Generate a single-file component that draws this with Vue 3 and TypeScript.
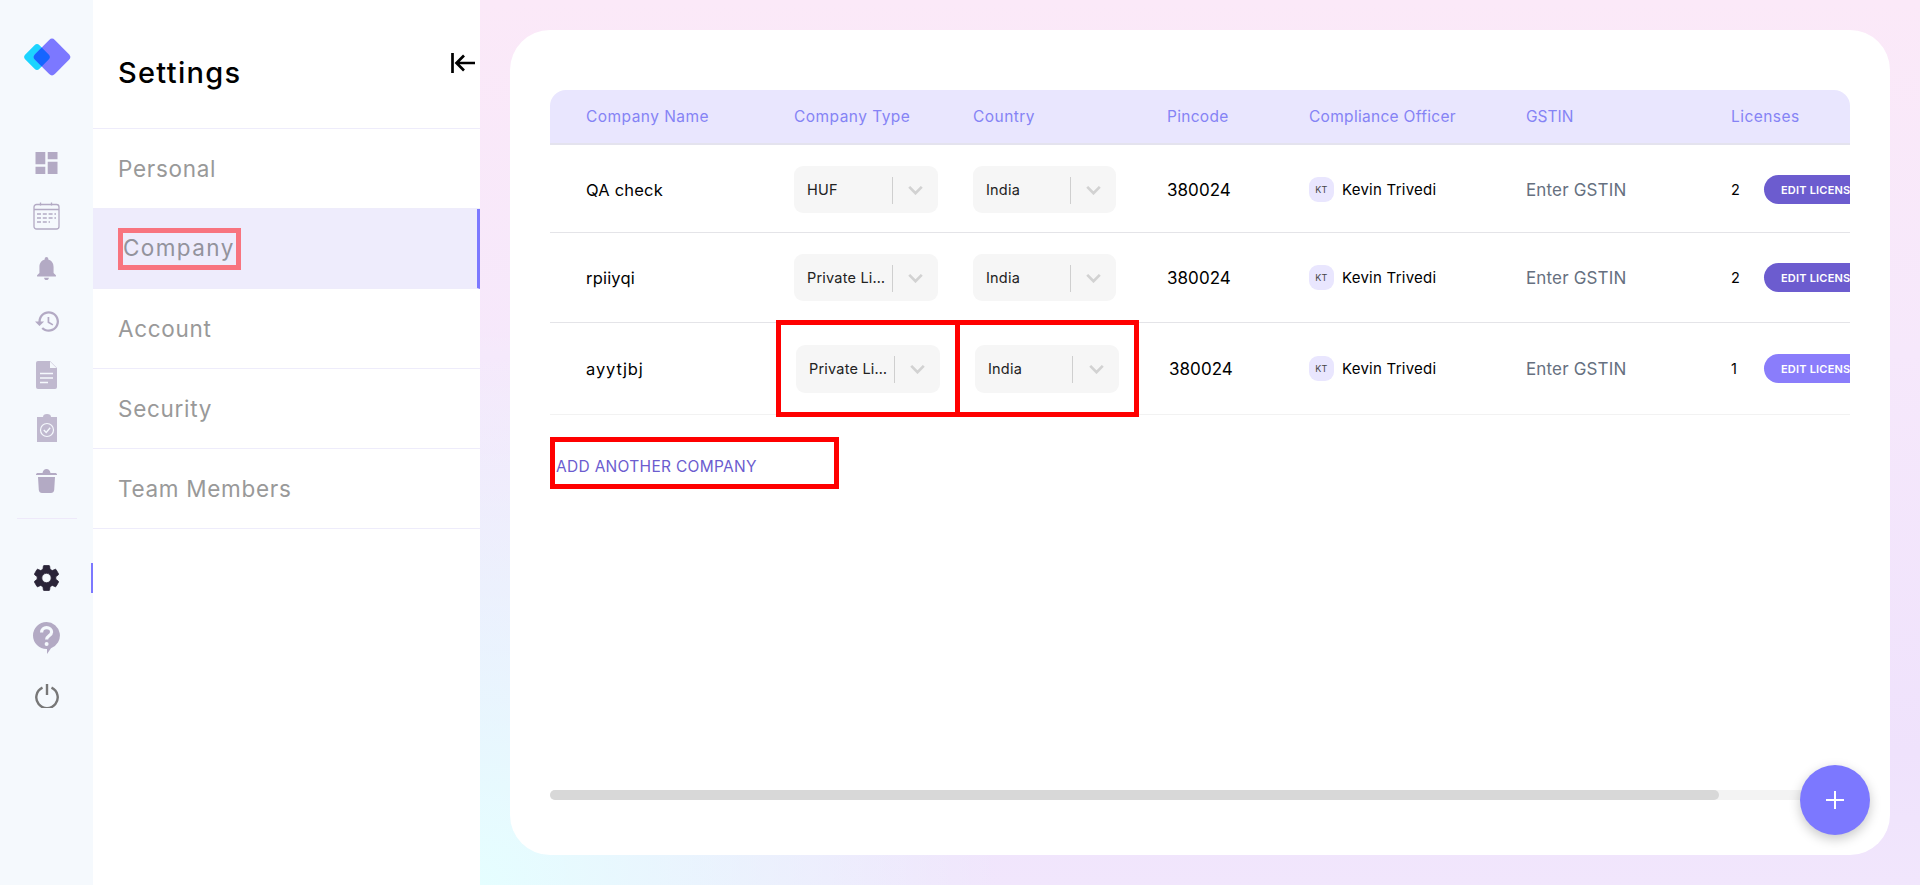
<template>
  <div class="page">
    <nav class="rail">
      <svg class="logo" viewBox="0 0 48 38" width="48" height="38">
        <defs>
          <clipPath id="logo-overlap">
            <rect x="15" y="5" width="28" height="28" rx="4" transform="rotate(45 29 19)" />
          </clipPath>
        </defs>
        <rect x="4" y="9" width="20" height="20" rx="3.5" transform="rotate(45 14 19)" fill="#1cd4ff" />
        <rect x="15" y="5" width="28" height="28" rx="4" transform="rotate(45 29 19)" fill="#7c78ff" />
        <g clip-path="url(#logo-overlap)">
          <rect x="4" y="9" width="20" height="20" rx="3.5" transform="rotate(45 14 19)" fill="#1565ff" />
        </g>
      </svg>

      <div class="rail-group">
        <a class="rail-item">
          <svg viewBox="3 3 18 18" width="23" height="22"><path fill="#b3aac4" d="M3 13h8V3H3v10zm0 8h8v-6H3v6zm10 0h8V11h-8v10zm0-18v6h8V3h-8z" /></svg>
        </a>
        <a class="rail-item">
          <svg viewBox="0 0 27 28" width="27" height="28" fill="none" stroke="#b3aac4">
            <rect x="1" y="2.5" width="25" height="24.5" rx="2.5" stroke-width="1.3" />
            <path d="M1 7.5h25M7.5 0.5v3M18.5 0.5v3" stroke-width="1.3" />
            <path d="M4 12h19M4 16h19M4 20h13" stroke-width="1.5" stroke-dasharray="4 1.8" />
          </svg>
        </a>
        <a class="rail-item">
          <svg viewBox="4 2.5 16 19.5" width="19" height="23"><path fill="#b3aac4" d="M12 22c1.1 0 2-.9 2-2h-4c0 1.1.89 2 2 2zm6-6v-5c0-3.07-1.64-5.64-4.5-6.32V4c0-.83-.67-1.5-1.5-1.5s-1.5.67-1.5 1.5v.68C7.63 5.36 6 7.92 6 11v5l-2 2v1h16v-1l-2-2z" /></svg>
        </a>
        <a class="rail-item">
          <svg viewBox="1 3 21 18" width="24" height="21"><path fill="#b3aac4" d="M13 3c-4.97 0-9 4.03-9 9H1l3.89 3.89.07.14L9 12H6c0-3.87 3.13-7 7-7s7 3.13 7 7-3.13 7-7 7c-1.93 0-3.68-.79-4.94-2.06l-1.42 1.42C8.27 19.99 10.51 21 13 21c4.97 0 9-4.03 9-9s-4.03-9-9-9zm-1 5v5l4.28 2.54.72-1.21-3.5-2.08V8H12z" /></svg>
        </a>
        <a class="rail-item">
          <svg viewBox="0 0 21 28" width="21" height="28">
            <path fill="#c0b9cf" d="M2 0h12l7 7v19a2 2 0 0 1-2 2H2a2 2 0 0 1-2-2V2a2 2 0 0 1 2-2z" />
            <path fill="#f5f9fd" d="M14 0.5V7h6.5z" />
            <path stroke="#f5f9fd" stroke-width="1.6" d="M4 12.5h13M4 17h13M4 21.5h8" />
          </svg>
        </a>
        <a class="rail-item">
          <svg viewBox="0 0 20 28" width="20" height="28">
            <path fill="#c0b9cf" d="M0 3h6a4 3 0 0 1 8 0h6v25H0z" />
            <circle cx="10" cy="16" r="6.5" fill="none" stroke="#f5f9fd" stroke-width="1.2" />
            <path d="M6.8 16l2.4 2.4 4-4.6" fill="none" stroke="#f5f9fd" stroke-width="1.4" />
          </svg>
        </a>
        <a class="rail-item">
          <svg viewBox="0 0 21 24" width="21" height="24">
            <path fill="#b3aac4" d="M0 5.5C0 4.500 1 4 2 4h4.500C7 1.500 8.500 0 10.500 0S14 1.500 14.500 4H19c1 0 2 .5 2 1.500V6H0zM2 8h17l-.8 13c-.2 2-1.500 3-3.200 3H6c-1.700 0-3-1-3.200-3z" />
          </svg>
        </a>
      </div>

      <div class="rail-divider"></div>

      <div class="rail-group">
        <a class="rail-item rail-item-tall active">
          <svg viewBox="2.5 2 19 20" width="25" height="26"><path fill="#2a2438" stroke="#2a2438" stroke-width="0.6" d="M19.14 12.94c.04-.3.06-.61.06-.94 0-.32-.02-.64-.07-.94l2.03-1.58c.18-.14.23-.41.12-.61l-1.92-3.32c-.12-.22-.37-.29-.59-.22l-2.39.96c-.5-.38-1.03-.7-1.62-.94l-.36-2.54c-.04-.24-.24-.41-.48-.41h-3.84c-.24 0-.43.17-.47.41l-.36 2.54c-.59.24-1.13.57-1.62.94l-2.39-.96c-.22-.08-.47 0-.59.22L2.74 8.87c-.12.21-.08.47.12.61l2.03 1.58c-.05.3-.09.63-.09.94s.02.64.07.94l-2.03 1.58c-.18.14-.23.41-.12.61l1.92 3.32c.12.22.37.29.59.22l2.39-.96c.5.38 1.03.7 1.62.94l.36 2.54c.05.24.24.41.48.41h3.84c.24 0 .44-.17.47-.41l.36-2.54c.59-.24 1.13-.56 1.62-.94l2.39.96c.22.08.47 0 .59-.22l1.92-3.32c.12-.22.07-.47-.12-.61l-2.01-1.58zM12 15.6c-1.98 0-3.6-1.62-3.6-3.6s1.62-3.6 3.6-3.6 3.6 1.62 3.6 3.6-1.62 3.6-3.6 3.6z" /></svg>
        </a>
        <a class="rail-item rail-item-tall">
          <svg viewBox="0 0 27 32" width="27" height="32">
            <path fill="#b3aac4" d="M13.5 0a13.5 13.5 0 0 1 4.5 26.2L14 32v-5H13.5a13.5 13.5 0 0 1 0-27z" />
            <path fill="none" stroke="#f5f9fd" stroke-width="3.2" d="M8.600 10.500c0-3 2.200-4.800 5-4.800s5 1.700 5 4.300c0 3.800-5 3.800-5 7.500" />
            <circle cx="13.6" cy="22" r="2" fill="#f5f9fd" />
          </svg>
        </a>
        <a class="rail-item rail-item-tall">
          <svg class="power" viewBox="0 0 24 24" width="24" height="24" fill="none" stroke="#777" stroke-width="2.4">
            <path d="M12 0v11" />
            <path d="M7.5 3.7A10.700 10.700 0 1 0 16.500 3.700" />
          </svg>
        </a>
      </div>
    </nav>

    <aside class="side">
      <header class="side-head">
        <h1>Settings</h1>
        <svg class="collapse" viewBox="0 0 24 20" width="24" height="20" fill="none" stroke="#000" stroke-width="2.7">
          <path d="M1.5 0v20M24 10H6M13 2.500L5.500 10l7.500 7.500" />
        </svg>
      </header>
      <a v-for="link in links" :key="link" class="side-link" :class="{ current: link === 'Company' }">
        <span>{{ link }}</span>
      </a>
    </aside>

    <main class="main">
      <section class="card">
        <div class="table-wrap">
          <div class="table">
            <div class="row head">
              <div v-for="col in columns" :key="col">{{ col }}</div>
            </div>
            <div v-for="(c, i) in companies" :key="c.name" class="row body" :class="'row-' + (i + 1)">
              <div class="name">{{ c.name }}</div>
              <div class="pick type">
                <span class="pick-text">{{ c.type }}</span>
                <svg viewBox="0 0 16 10" width="15" height="9" fill="none" stroke="#d2d2d2" stroke-width="3"><path d="M1 1l7 7 7-7" /></svg>
              </div>
              <div class="pick country">
                <span class="pick-text">{{ c.country }}</span>
                <svg viewBox="0 0 16 10" width="15" height="9" fill="none" stroke="#d2d2d2" stroke-width="3"><path d="M1 1l7 7 7-7" /></svg>
              </div>
              <div class="pin">{{ c.pincode }}</div>
              <div class="officer"><span class="avatar">KT</span>Kevin Trivedi</div>
              <div class="gstin">Enter GSTIN</div>
              <div class="lic">
                <span class="lic-count">{{ c.licenses }}</span>
                <button class="lic-btn">EDIT LICENSES</button>
              </div>
            </div>
          </div>
          <div class="add-row">
            <a class="add">ADD ANOTHER COMPANY</a>
          </div>
          <div class="mark mark-type"></div>
          <div class="mark mark-country"></div>
        </div>
        <div class="scroll"><div class="thumb" :style="{ width: thumbWidth + 'px' }"></div></div>
        <button class="fab">
          <svg viewBox="0 0 18 18" width="18" height="18" stroke="#fff" stroke-width="2"><path d="M9 0v18M0 9h18" /></svg>
        </button>
      </section>
    </main>
  </div>
</template>

<script setup lang="ts">
interface Company {
  name: string
  type: string
  country: string
  pincode: string
  licenses: number
}

const links: string[] = ['Personal', 'Company', 'Account', 'Security', 'Team Members']
const columns: string[] = ['Company Name', 'Company Type', 'Country', 'Pincode', 'Compliance Officer', 'GSTIN', 'Licenses']
const companies: Company[] = [
  { name: 'QA check', type: 'HUF', country: 'India', pincode: '380024', licenses: 2 },
  { name: 'rpiiyqi', type: 'Private Limited', country: 'India', pincode: '380024', licenses: 2 },
  { name: 'ayytjbj', type: 'Private Limited', country: 'India', pincode: '380024', licenses: 1 },
]
const thumbWidth = 1169
</script>

<style>
html, body { margin: 0; overflow: hidden; }
</style>

<style scoped>
* { box-sizing: border-box; }

.page {
  display: flex;
  height: 885px;
  font-family: Inter, "Liberation Sans", sans-serif;
}

.rail {
  width: 93px;
  flex: none;
  background: #f5f9fd;
  display: flex;
  flex-direction: column;
  align-items: center;
  padding-top: 38px;
}
.logo { margin-bottom: 60px; }
.rail-group { display: flex; flex-direction: column; width: 100%; }
.rail-item {
  height: 53px;
  display: flex;
  align-items: center;
  justify-content: center;
  position: relative;
}
.rail-item-tall { height: 59.5px; }
.power { margin-top: -2px; }
.rail-divider {
  width: 60px;
  height: 1px;
  background: #eee9fa;
  margin-top: 11px;
  margin-bottom: 29.5px;
}
.active::after {
  content: "";
  position: absolute;
  right: 0;
  top: 14px;
  width: 2px;
  height: 30px;
  background: #7c78ff;
}

.side {
  width: 387px;
  flex: none;
  background: #fff;
}
.side-head {
  height: 129px;
  border-bottom: 1px solid #eeecfb;
  padding-left: 25px;
  position: relative;
}
.side-head h1 {
  margin: 0;
  padding-top: 53px;
  font-size: 29px;
  line-height: 40px;
  font-weight: 500;
  letter-spacing: 1.3px;
  color: #000;
}
.collapse { position: absolute; left: 358px; top: 53px; }
.side-link {
  height: 80px;
  display: flex;
  align-items: center;
  padding-left: 25px;
  border-bottom: 1px solid #eeecfb;
  font-size: 22.5px;
  letter-spacing: 0.7px;
  color: #999;
}
.side-link.current {
  background: #eeecfc;
  border-right: 3px solid #7c78ff;
  color: #93939c;
}
.side-link.current span {
  border: 5px solid #f8747f;
  height: 42px;
  line-height: 30px;
  width: 123px;
  letter-spacing: 1.4px;
  white-space: nowrap;
}

.main {
  flex: 1;
  padding: 30px;
  background:
    radial-gradient(ellipse 520px 560px at 0% 100%, #e5feff 0, rgba(229, 254, 255, 0) 100%),
    linear-gradient(180deg, #fbe9f8 0, #f6e8fb 40%, #efe2fc 85%, #f1e6fc 100%);
}
.card {
  height: 825px;
  background: #fff;
  border-radius: 40px;
  padding: 60px 40px 55px;
  display: flex;
  flex-direction: column;
  position: relative;
}
.table-wrap { flex: 1; position: relative; overflow: hidden; }
.table { width: 1300px; }
.row {
  display: grid;
  grid-template-columns: 244px 179px 194px 142px 217px 205px 1fr;
  align-items: center;
}
.head {
  height: 55px;
  background: #e9e6fe;
  border-bottom: 2px solid #e4e3ee;
  border-radius: 16px 16px 0 0;
  font-size: 15.5px;
  letter-spacing: 0.45px;
  color: #8583f5;
}
.head > div:nth-child(4), .head > div:nth-child(5) { letter-spacing: 0.3px; }
.head > div:nth-child(6) { letter-spacing: 0; }
.head > div:first-child, .name { padding-left: 36px; }
.body { border-bottom: 1px solid #e4e4e8; font-size: 16.5px; letter-spacing: 0.2px; color: #000; }
.row-1 { height: 88px; padding-top: 2px; }
.row-2 { height: 90px; }
.row-3 { height: 92px; border-bottom-color: #f2f2f2; }
.row-3 .name { letter-spacing: 0.9px; }

.pick {
  height: 47px;
  width: 144px;
  background: #f6f6f6;
  border-radius: 9px;
  display: flex;
  align-items: center;
  padding-left: 13px;
  font-size: 14.5px;
  color: #222;
  position: relative;
}
.pick-text {
  width: 80px;
  white-space: nowrap;
  overflow: hidden;
  text-overflow: ellipsis;
}
.pick svg { position: absolute; right: 15px; top: 20px; }
.pick::after {
  content: "";
  position: absolute;
  left: 98px;
  top: 11px;
  width: 1px;
  height: 27px;
  background: #cfcfcf;
}
.country { width: 143px; }
.country::after { left: 97px; }
.row-3 .pick { margin-left: 2px; height: 48px; }
.row-3 .country { width: 144px; }
.row-3 .pin { margin-left: 2px; }

.pin { font-size: 17px; letter-spacing: 0.05px; }
.officer { display: flex; align-items: center; font-size: 15px; letter-spacing: 0.25px; gap: 8px; }
.avatar {
  width: 25px;
  height: 25px;
  border-radius: 9px;
  background: #e9e6fe;
  color: #444;
  font-size: 9px;
  display: flex;
  align-items: center;
  justify-content: center;
}
.gstin { font-size: 17px; letter-spacing: 0.15px; color: #667080; }
.lic { display: flex; align-items: center; font-size: 14.5px; }
.lic-count { width: 33px; }
.lic-btn {
  height: 29px;
  width: 87px;
  flex: none;
  border: 0;
  border-radius: 15px 0 0 15px;
  background: #6c5ccf;
  color: #fff;
  font: 600 11px Inter, sans-serif;
  letter-spacing: 0.2px;
  text-align: left;
  padding: 0 0 0 17px;
  white-space: nowrap;
  overflow: hidden;
}
.row-3 .lic-btn { background: #8a7dfb; }

.add-row { padding-top: 22px; }
.add {
  display: flex;
  align-items: center;
  width: 289px;
  height: 52px;
  border: 5px solid #f00;
  padding-left: 1px;
  padding-top: 7px;
  color: #6c5ccf;
  font-size: 15.5px;
  letter-spacing: 0.3px;
  white-space: nowrap;
}

/* red review boxes drawn over the third row */
.mark {
  position: absolute;
  top: 230px;
  width: 184px;
  height: 97px;
  border: 5px solid #f00;
  pointer-events: none;
}
.mark-type { left: 226px; }
.mark-country { left: 405px; }

.scroll {
  height: 10px;
  border-radius: 5px;
  background: #f3f3f3;
  flex: none;
}
.thumb { height: 10px; border-radius: 5px; background: #d8d8d8; }

.fab {
  position: absolute;
  left: 1290px;
  top: 735px;
  width: 70px;
  height: 70px;
  border: 0;
  border-radius: 50%;
  background: #7c78ff;
  box-shadow: 0 4px 12px rgba(0, 0, 0, 0.22);
  display: flex;
  align-items: center;
  justify-content: center;
  padding: 0;
}
</style>
